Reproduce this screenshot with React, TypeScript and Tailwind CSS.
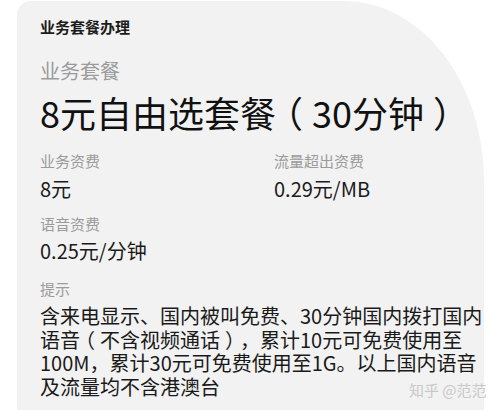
export default function App() {
  const font = { fontFamily: '"Noto Sans CJK SC", "Noto Sans", sans-serif' };
  const L = () => <span className="inline-block -translate-x-[0.25em]">（</span>;
  const R = () => <span className="inline-block translate-x-[0.25em]">）</span>;
  return (
    <div lang="zh-CN" className="relative w-[499px] h-[410px] bg-white overflow-hidden" style={font}>
      <div className="ml-[17px] mr-[15px] mt-[1px] h-[420px] bg-[#f2f2f2] rounded-tl-[14px] rounded-tr-[140px_180px] pl-[23px] pt-[18px]">
        <div className="text-[15px] leading-[15px] font-bold text-[#1c1c1c]">业务套餐办理</div>
        <div className="mt-[27px] text-[20px] leading-[20px] text-[#9b9b9b]">业务套餐</div>
        <div className="mt-[13px] text-[36px] leading-[36px] text-[#111] whitespace-nowrap">
          8元自由选套餐<L />30分钟<R />
        </div>
        <div className="mt-[23px] grid grid-cols-[234px_1fr]">
          <div>
            <div className="text-[15px] leading-[15px] text-[#9b9b9b]">业务资费</div>
            <div className="mt-[11px] text-[20px] leading-[20px] text-[#1a1a1a]">8元</div>
          </div>
          <div>
            <div className="text-[15px] leading-[15px] text-[#9b9b9b]">流量超出资费</div>
            <div className="mt-[11px] text-[20px] leading-[20px] text-[#1a1a1a]">0.29元/MB</div>
          </div>
        </div>
        <div className="mt-[17px] text-[15px] leading-[15px] text-[#9b9b9b]">语音资费</div>
        <div className="mt-[10px] text-[20px] leading-[20px] text-[#1a1a1a]">0.25元/分钟</div>
        <div className="mt-[20px] text-[15px] leading-[15px] text-[#9b9b9b]">提示</div>
        <div className="mt-[8px] text-[20px] leading-[23.5px] text-[#1a1a1a] whitespace-nowrap">
          <div>含来电显示、国内被叫免费、30分钟国内拨打国内</div>
          <div>
            语音<L />不含视频通话<R />，累计10元可免费使用至
          </div>
          <div>100M，累计30元可免费使用至1G。以上国内语音</div>
          <div>及流量均不含港澳台</div>
        </div>
      </div>
      <div className="absolute left-[409px] top-[382px] text-[15px] leading-[15px] text-[#c9c9c9] whitespace-nowrap">
        知乎 @范范
      </div>
    </div>
  );
}
